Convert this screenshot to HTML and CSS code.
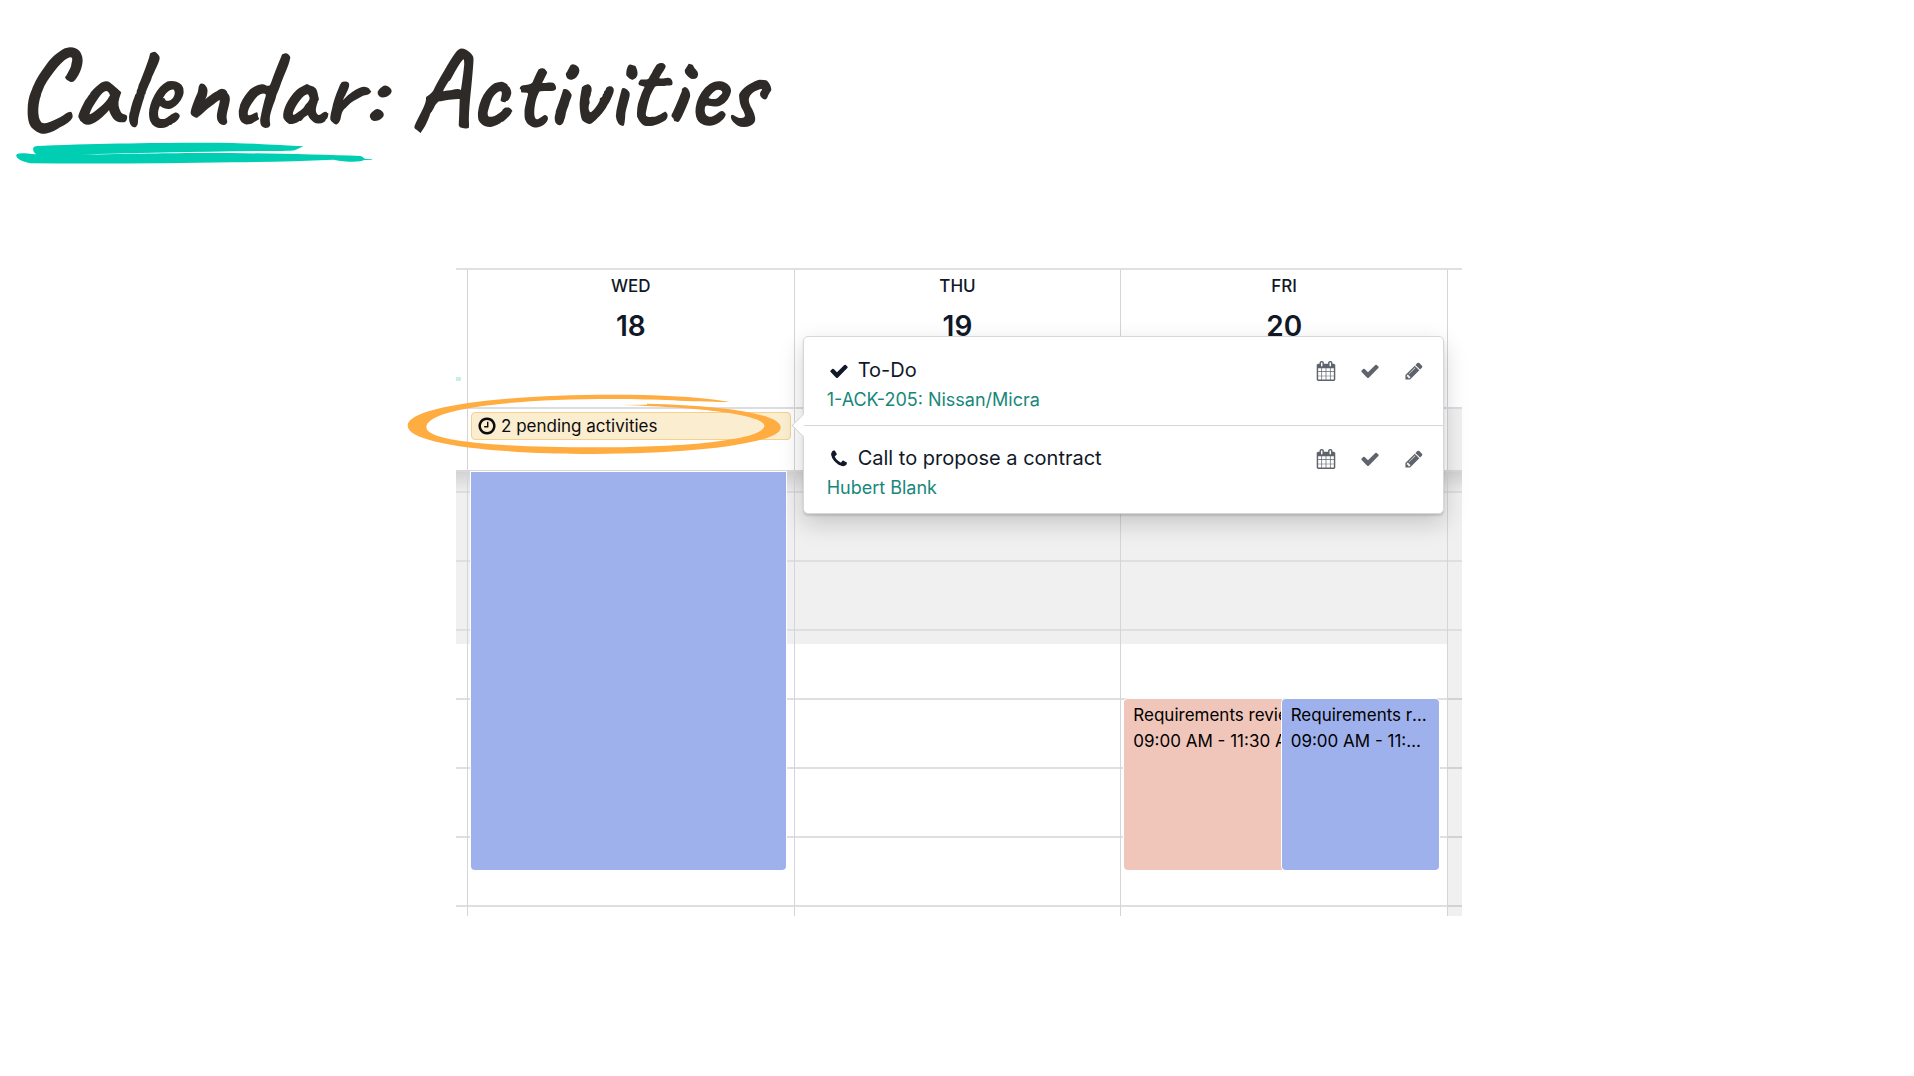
FILE: index.html
```html
<!DOCTYPE html>
<html lang="en">
<head>
    <meta charset="UTF-8">
    <meta name="viewport" content="width=device-width, initial-scale=1.0">
    <title>Calendar: Activities</title>
    <link rel="stylesheet" href="styles.css">
</head>
<body>
    <!-- shared icons -->
    <svg class="sprite" aria-hidden="true">
        <symbol id="check" viewBox="0 0 1792 1792"><path d="M1671 566q0 40-28 68l-724 724-136 136q-28 28-68 28t-68-28l-136-136-362-362q-28-28-28-68t28-68l136-136q28-28 68-28t68 28l294 295 656-657q28-28 68-28t68 28l136 136q28 28 28 68z"/></symbol>
        <symbol id="phone" viewBox="0 0 1792 1792"><path d="M1600 1240q0 27-10 70.5t-21 68.5q-21 50-122 106-94 51-186 51-27 0-53-3.5t-57.5-12.5-47-14.5-55.5-20.5-49-18q-98-35-175-83-127-79-264-216t-216-264q-48-77-83-175-3-9-18-49t-20.5-55.5-14.5-47-12.5-57.5-3.5-53q0-92 51-186 56-101 106-122 25-11 68.5-21t70.5-10q14 0 21 3 18 6 53 76 11 19 30 54t35 63.5 31 53.5q3 4 17.5 25t21.5 35.5 7 28.5q0 20-28.5 50t-62 55-62 53-28.5 46q0 9 5 22.5t8.5 20.5 14 24 11.5 19q76 137 174 235t235 174q2 1 19 11.5t24 14 20.5 8.5 22.5 5q18 0 46-28.5t53-62 55-62 50-28.5q14 0 28.5 7t35.5 21.5 25 17.5q25 15 53.5 31t63.5 35 54 30q70 35 76 53 3 7 3 21z"/></symbol>
        <symbol id="calendar" viewBox="0 0 1792 1792"><path d="M192 1664h288v-288h-288v288zm352 0h320v-288h-320v288zm-352-352h288v-320h-288v320zm352 0h320v-320h-320v320zm-352-384h288v-288h-288v288zm736 736h320v-288h-320v288zm-384-736h320v-288h-320v288zm768 736h288v-288h-288v288zm-384-352h320v-320h-320v320zm-352-864v-288q0-13-9.500-22.500t-22.500-9.500h-64q-13 0-22.500 9.500t-9.500 22.500v288q0 13 9.500 22.500t22.500 9.500h64q13 0 22.500-9.500t9.500-22.500zm736 864h288v-320h-288v320zm-384-384h320v-288h-320v288zm384 0h288v-288h-288v288zm32-480v-288q0-13-9.500-22.500t-22.500-9.500h-64q-13 0-22.500 9.500t-9.500 22.500v288q0 13 9.500 22.500t22.500 9.500h64q13 0 22.500-9.500t9.500-22.500zm384-64v1280q0 52-38 90t-90 38h-1408q-52 0-90-38t-38-90v-1280q0-52 38-90t90-38h128v-96q0-66 47-113t113-47h64q66 0 113 47t47 113v96h384v-96q0-66 47-113t113-47h64q66 0 113 47t47 113v96h128q52 0 90 38t38 90z"/></symbol>
        <symbol id="pencil" viewBox="0 0 1792 1792"><path d="M491 1536l91-91-235-235-91 91v107h128v128h107zm523-928q0-22-22-22-10 0-17 7l-542 542q-7 7-7 17 0 22 22 22 10 0 17-7l542-542q7-7 7-17zm-54-192l416 416-832 832h-416v-416zm683 96q0 53-37 90l-166 166-416-416 166-165q36-38 90-38 53 0 91 38l235 234q37 39 37 91z"/></symbol>
        <symbol id="clock" viewBox="0 0 1792 1792"><path d="M1024 544v448q0 14-9 23t-23 9h-320q-14 0-23-9t-9-23v-64q0-14 9-23t23-9h224v-352q0-14 9-23t23-9h64q14 0 23 9t9 23zm416 352q0-148-73-273t-198-198-273-73-273 73-198 198-73 273 73 273 198 198 273 73 273-73 198-198 73-273zm224 0q0 209-103 385.500t-279.500 279.500-385.500 103-385.500-103-279.500-279.500-103-385.500 103-385.500 279.500-279.500 385.500-103 385.500 103 279.500 279.500 103 385.500z"/></symbol>
    </svg>

    <header class="title">
        <h1>Calendar: Activities</h1>
        <svg class="underline" viewBox="48 366 1070 66" aria-hidden="true">
            <path d="M48 406C50 398 62 398 108 403C98 396 98 388 100 382C104 377 116 378 130 377C300 370 480 368 620 368C730 368 830 375 910 379L884 391C870 394 830 392 790 393C600 395 400 399 234 404C400 402 500 399 620 399C780 399 960 404 1080 408C1088 410 1090 414 1095 417L1115 417L1115 419L1092 420C1080 427 1040 427 1000 419C900 424 800 425 700 427C500 430 300 432 90 430C65 425 50 418 48 406Z"/>
        </svg>
    </header>

    <main class="slide">
        <div class="calendar">
            <div class="row days">
                <div class="gutter"><span class="mark"></span></div>
                <div class="cell"><span class="day-name">WED</span><span class="day-number">18</span></div>
                <div class="cell"><span class="day-name">THU</span><span class="day-number">19</span></div>
                <div class="cell"><span class="day-name">FRI</span><span class="day-number">20</span></div>
                <div class="cell"></div>
            </div>

            <div class="row all-day">
                <div class="gutter"></div>
                <div class="cell">
                    <button class="pending" type="button">
                        <svg class="icon"><use href="#clock"/></svg>
                        2 pending activities
                    </button>
                    <svg class="circle" viewBox="20 402 1125 183" aria-hidden="true">
                        <path d="M985 425C880 408 760 404 640 404C300 404 22 440 22 497C22 550 270 582 580 582C880 582 1141 550 1141 503C1141 460 960 436 740 431L740 434L650 435C900 440 1092 465 1092 497C1092 540 850 563 580 562C300 562 78 545 78 502C78 450 300 417 640 417C780 417 860 425 985 426Z"/>
                    </svg>
                </div>
                <div class="cell">
                    <div class="popover">
                        <div class="activity">
                            <div class="info">
                                <div class="name"><svg class="icon"><use href="#check"/></svg>To-Do</div>
                                <a href="#">1-ACK-205: Nissan/Micra</a>
                            </div>
                            <div class="actions">
                                <button type="button" aria-label="Reschedule"><svg class="icon"><use href="#calendar"/></svg></button>
                                <button type="button" aria-label="Mark as done"><svg class="icon"><use href="#check"/></svg></button>
                                <button type="button" aria-label="Edit"><svg class="icon"><use href="#pencil"/></svg></button>
                            </div>
                        </div>
                        <div class="activity">
                            <div class="info">
                                <div class="name"><svg class="icon"><use href="#phone"/></svg>Call to propose a contract</div>
                                <a href="#">Hubert Blank</a>
                            </div>
                            <div class="actions">
                                <button type="button" aria-label="Reschedule"><svg class="icon"><use href="#calendar"/></svg></button>
                                <button type="button" aria-label="Mark as done"><svg class="icon"><use href="#check"/></svg></button>
                                <button type="button" aria-label="Edit"><svg class="icon"><use href="#pencil"/></svg></button>
                            </div>
                        </div>
                    </div>
                </div>
                <div class="cell"></div>
                <div class="cell weekend"></div>
            </div>

            <div class="row hours">
                <div class="gutter"></div>
                <div class="cell">
                    <div class="events full">
                        <div class="event blue"></div>
                    </div>
                </div>
                <div class="cell"></div>
                <div class="cell">
                    <div class="events nine">
                        <div class="event red">
                            <div>Requirements review</div>
                            <div>09:00 AM - 11:30 AM</div>
                        </div>
                        <div class="event blue">
                            <div>Requirements review</div>
                            <div>09:00 AM - 11:30 AM</div>
                        </div>
                    </div>
                </div>
                <div class="cell weekend"></div>
            </div>
        </div>
    </main>
</body>
</html>
```
FILE: styles.css
```css
* {
    box-sizing: border-box;
}

body {
    margin: 0;
    background-color: #fff;
    color: #111827;
    font-family: Inter, "Liberation Sans", sans-serif;
    font-size: 17px;
}

button {
    padding: 0;
    border: 0;
    background: none;
    color: inherit;
    font: inherit;
    cursor: pointer;
}

.sprite {
    position: absolute;
    width: 0;
    height: 0;
}

.icon {
    flex: none;
    width: 20px;
    height: 20px;
    fill: currentColor;
}

/* title */
.title {
    height: 268px;
    padding: 37px 16px 0;
}

.title h1 {
    margin: 0;
    color: #2d2a28;
    font-family: Caveat, "Caveat Brush", Lato, sans-serif;
    font-size: 112px;
    font-weight: bold;
    line-height: 105px;
}

.underline {
    display: block;
    width: 357px;
    height: 22px;
    fill: #00ceb3;
}

/* calendar */
.slide {
    padding-left: 4px;
}

.calendar {
    width: 1006px;
    max-width: 100%;
    margin: 0 auto;
    border-top: 2px solid #dee0e2;
}

.row {
    display: grid;
    grid-template-columns: 11px repeat(3, 1fr) 15px;
}

.cell {
    position: relative;
    min-width: 0;
    border-left: 1px solid #d4d5d8;
}

.days {
    height: 137px;
}

.days .cell {
    display: flex;
    flex-direction: column;
    align-items: center;
    padding-top: 4px;
    font-weight: 500;
}

.day-name {
    line-height: 24px;
}

.day-number {
    margin-top: 12px;
    font-size: 28px;
    font-weight: 600;
    line-height: 32px;
}

.mark {
    display: block;
    width: 5px;
    height: 4px;
    margin-top: 107px;
    background-color: #cdeee8;
}

.all-day {
    height: 65px;
    border-top: 2px solid #dcdde0;
    border-bottom: 2px solid #d8d8d8;
}

.all-day .cell {
    padding: 3px 3px 0 3px;
}

.all-day .weekend {
    background-color: #f0f0f0;
}

.pending {
    display: flex;
    align-items: center;
    gap: 4px;
    width: 100%;
    height: 28px;
    padding: 0 5px;
    border: 1px solid #f5d18b;
    border-radius: 4px;
    background-color: #fbedd0;
    color: #0c0c0c;
}

.circle {
    position: absolute;
    top: -15px;
    left: -61px;
    width: 375px;
    height: 61px;
    fill: #ffac41;
}

/* activities popover */
.popover {
    position: absolute;
    z-index: 2;
    top: -73px;
    left: 8px;
    width: calc(200% - 10px);
    border: 1px solid #d5d7da;
    border-radius: 5px;
    background-color: #fff;
    box-shadow: 0 9px 24px rgba(0, 0, 0, 0.18), 0 2px 2px rgba(0, 0, 0, 0.12);
}

.popover::before {
    content: "";
    position: absolute;
    top: 80px;
    left: -9px;
    width: 16px;
    height: 16px;
    border-bottom: 1px solid #d5d7da;
    border-left: 1px solid #d5d7da;
    background-color: #fff;
    transform: rotate(45deg);
}

.activity {
    display: flex;
    position: relative;
    justify-content: space-between;
    height: 88px;
    padding: 19px 7px 0 23px;
    font-size: 20px;
    line-height: 29px;
}

.activity + .activity {
    padding-top: 18px;
    border-top: 1px solid #d5d7da;
}

.name {
    display: flex;
    align-items: center;
    gap: 9px;
    padding-left: 2px;
}

.activity a {
    color: #17877b;
    font-size: 18px;
    text-decoration: none;
}

.actions {
    display: flex;
    align-items: flex-start;
}

.actions button {
    display: flex;
    align-items: center;
    justify-content: center;
    width: 44px;
    height: 29px;
    color: #5f636b;
}

/* hour grid, one line each 69px, grey until the working hours start */
.hours {
    height: 444px;
    background-image:
        linear-gradient(rgba(0, 0, 0, 0.12), transparent 22px),
        linear-gradient(#dedfe1 2px, transparent 2px),
        linear-gradient(#f0f0f0 172px, transparent 172px);
    background-size: 100% 100%, 100% 69px, 100% 100%;
    background-position: 0 0, 0 19px, 0 0;
}

.hours .weekend {
    background-image: linear-gradient(transparent 172px, rgba(0, 0, 0, 0.06) 172px);
}

.events {
    display: grid;
    grid-auto-columns: 1fr;
    grid-auto-flow: column;
    position: absolute;
    right: 8px;
    left: 3px;
}

.full {
    top: 0;
    height: 398px;
}

.nine {
    top: 227px;
    height: 171px;
}

.event {
    min-width: 0;
    overflow: hidden;
    padding: 3px 11px 0 9px;
    border-radius: 4px;
    box-shadow: 0 0 0 1px #fff;
    color: #000;
    line-height: 26px;
    white-space: nowrap;
}

.event div {
    overflow: hidden;
    text-overflow: ellipsis;
}

.full .event {
    border-radius: 0 0 4px 4px;
}

.blue {
    background-color: #9fb1ed;
}

.red {
    padding-right: 0;
    border-radius: 4px 0 0 4px;
    background-color: #f1c6ba;
}

.red div {
    text-overflow: clip;
}
```
